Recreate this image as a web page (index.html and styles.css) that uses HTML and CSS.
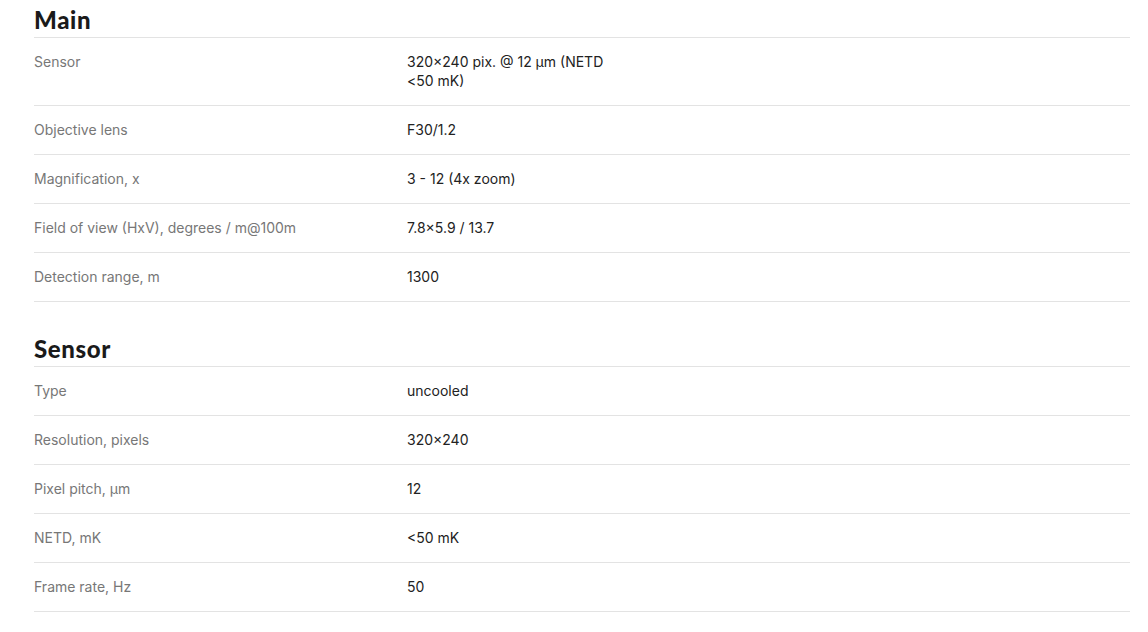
FILE: index.html
```html
<!DOCTYPE html>
<html lang="en">
<head>
<meta charset="utf-8">
<title>Specifications</title>
<link rel="stylesheet" href="styles.css">
</head>
<body>
<div class="specs">
  <section class="group">
    <h2 class="group-title">Main</h2>
    <div class="row"><div class="label">Sensor</div><div class="value">320×240 pix. @ 12 µm (NETD &lt;50 mK)</div></div>
    <div class="row"><div class="label">Objective lens</div><div class="value">F30/1.2</div></div>
    <div class="row"><div class="label">Magnification, x</div><div class="value">3 - 12 (4x zoom)</div></div>
    <div class="row"><div class="label">Field of view (HxV), degrees / m@100m</div><div class="value">7.8×5.9 / 13.7</div></div>
    <div class="row"><div class="label">Detection range, m</div><div class="value">1300</div></div>
  </section>
  <section class="group">
    <h2 class="group-title">Sensor</h2>
    <div class="row"><div class="label">Type</div><div class="value">uncooled</div></div>
    <div class="row"><div class="label">Resolution, pixels</div><div class="value">320×240</div></div>
    <div class="row"><div class="label">Pixel pitch, µm</div><div class="value">12</div></div>
    <div class="row"><div class="label">NETD, mK</div><div class="value">&lt;50 mK</div></div>
    <div class="row"><div class="label">Frame rate, Hz</div><div class="value">50</div></div>
  </section>
</div>
</body>
</html>
```

FILE: styles.css
```css
html, body {
  margin: 0;
  padding: 0;
  background: #ffffff;
}

body {
  font-family: Inter, "Liberation Sans", sans-serif;
  font-size: 14px;
  color: #222222;
}

.specs {
  width: 1096px;
  margin-left: 34px;
  display: flex;
  flex-direction: column;
  gap: 27px;
}

.group {
  display: flex;
  flex-direction: column;
}

.group-title {
  margin: 0;
  padding-top: 7px;
  height: 38px;
  box-sizing: border-box;
  font-family: Lato, "Open Sans", sans-serif;
  font-weight: 900;
  font-size: 24px;
  line-height: 26px;
  letter-spacing: 0.6px;
  color: #1a1a1a;
  border-bottom: 1px solid #e3e3e3;
}

.row {
  display: flex;
  padding: 14px 0 15px;
  line-height: 19px;
  border-bottom: 1px solid #e3e3e3;
}

.label {
  width: 373px;
  flex-shrink: 0;
  color: #777777;
}

.value {
  width: 215px;
  color: #222222;
}
```
